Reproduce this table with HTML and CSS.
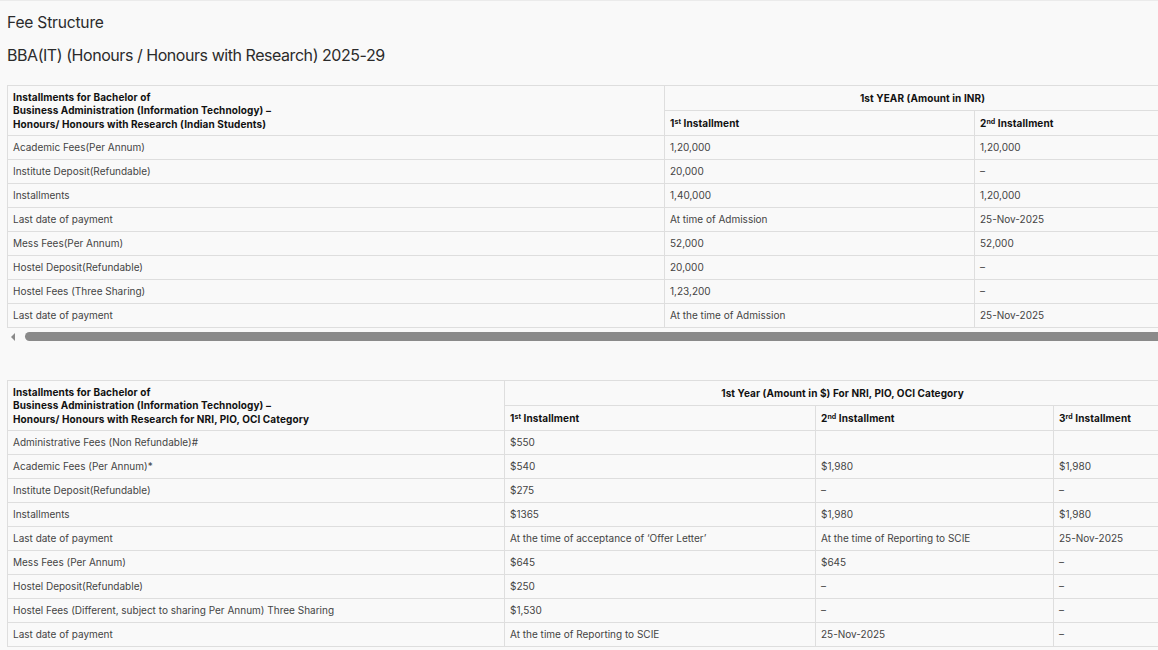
FILE: index.html
```html
<!DOCTYPE html>
<html lang="en">
<head>
<meta charset="utf-8">
<title>Fee Structure</title>
<link rel="stylesheet" href="styles.css">
</head>
<body>
<main class="page">
  <h2 class="title">Fee Structure</h2>
  <h3 class="subtitle">BBA(IT) (Honours / Honours with Research) 2025-29</h3>

  <section class="scroller">
    <div class="clip">
      <table class="fees fees-inr">
        <colgroup><col class="c1a"><col class="c2a"><col class="c3a"></colgroup>
        <thead>
          <tr>
            <th rowspan="2" class="lead">Installments for Bachelor of<br>Business Administration (Information Technology) –<br>Honours/ Honours with Research (Indian Students)</th>
            <th colspan="2" class="center">1st YEAR (Amount in INR)</th>
          </tr>
          <tr>
            <th>1<sup>st</sup> Installment</th>
            <th>2<sup>nd</sup> Installment</th>
          </tr>
        </thead>
        <tbody>
          <tr><td>Academic Fees(Per Annum)</td><td>1,20,000</td><td>1,20,000</td></tr>
          <tr><td>Institute Deposit(Refundable)</td><td>20,000</td><td>–</td></tr>
          <tr><td>Installments</td><td>1,40,000</td><td>1,20,000</td></tr>
          <tr><td>Last date of payment</td><td>At time of Admission</td><td>25-Nov-2025</td></tr>
          <tr><td>Mess Fees(Per Annum)</td><td>52,000</td><td>52,000</td></tr>
          <tr><td>Hostel Deposit(Refundable)</td><td>20,000</td><td>–</td></tr>
          <tr><td>Hostel Fees (Three Sharing)</td><td>1,23,200</td><td>–</td></tr>
          <tr><td>Last date of payment</td><td>At the time of Admission</td><td>25-Nov-2025</td></tr>
        </tbody>
      </table>
    </div>
    <div class="hbar">
      <span class="arrow"></span>
      <span class="thumb"></span>
    </div>
  </section>

  <section class="scroller second">
    <div class="clip">
      <table class="fees fees-usd">
        <colgroup><col class="c1b"><col class="c2b"><col class="c3b"><col class="c4b"></colgroup>
        <thead>
          <tr>
            <th rowspan="2" class="lead">Installments for Bachelor of<br>Business Administration (Information Technology) –<br>Honours/ Honours with Research for NRI, PIO, OCI Category</th>
            <th colspan="3" class="center">1st Year (Amount in $) For NRI, PIO, OCI Category</th>
          </tr>
          <tr>
            <th>1<sup>st</sup> Installment</th>
            <th>2<sup>nd</sup> Installment</th>
            <th>3<sup>rd</sup> Installment</th>
          </tr>
        </thead>
        <tbody>
          <tr><td>Administrative Fees (Non Refundable)#</td><td>$550</td><td></td><td></td></tr>
          <tr><td>Academic Fees (Per Annum)*</td><td>$540</td><td>$1,980</td><td>$1,980</td></tr>
          <tr><td>Institute Deposit(Refundable)</td><td>$275</td><td>–</td><td>–</td></tr>
          <tr><td>Installments</td><td>$1365</td><td>$1,980</td><td>$1,980</td></tr>
          <tr><td>Last date of payment</td><td>At the time of acceptance of ‘Offer Letter’</td><td>At the time of Reporting to SCIE</td><td>25-Nov-2025</td></tr>
          <tr><td>Mess Fees (Per Annum)</td><td>$645</td><td>$645</td><td>–</td></tr>
          <tr><td>Hostel Deposit(Refundable)</td><td>$250</td><td>–</td><td>–</td></tr>
          <tr><td>Hostel Fees (Different, subject to sharing Per Annum) Three Sharing</td><td>$1,530</td><td>–</td><td>–</td></tr>
          <tr><td>Last date of payment</td><td>At the time of Reporting to SCIE</td><td>25-Nov-2025</td><td>–</td></tr>
        </tbody>
      </table>
    </div>
  </section>
</main>
</body>
</html>
```

FILE: styles.css
```css
html, body {
  margin: 0;
  padding: 0;
  background: #f9f9f9;
}
body {
  border-top: 1px solid #ebebeb;
  font-family: Inter, "Noto Sans", sans-serif;
  color: #3a3a3a;
  overflow: hidden;
}
.page {
  padding: 0 0 0 7px;
}
.title {
  margin: 0;
  padding-top: 12px;
  font-size: 15.6px;
  line-height: 20px;
  font-weight: 400;
  color: #2b2b2b;
  letter-spacing: -0.2px;
}
.subtitle {
  margin: 0;
  padding-top: 12px;
  font-size: 16px;
  line-height: 20px;
  font-weight: 400;
  color: #2b2b2b;
  letter-spacing: -0.45px;
}
.scroller {
  margin-top: 20px;
  width: 1151px;
}
.scroller.second {
  margin-top: 38px;
}
.clip {
  overflow: hidden;
  width: 1151px;
}
.fees {
  border-collapse: collapse;
  table-layout: fixed;
  width: 1173px;
  font-size: 10px;
}
.c1a { width: 657px; }
.c2a { width: 310px; }
.c3a { width: 206px; }
.c1b { width: 497px; }
.c2b { width: 311px; }
.c3b { width: 238px; }
.c4b { width: 127px; }
.fees th,
.fees td {
  border: 1px solid #dedede;
  text-align: left;
  vertical-align: middle;
  padding: 0 5px;
  height: 23px;
  line-height: 13px;
  white-space: nowrap;
  overflow: hidden;
}
.fees th {
  font-weight: 700;
  color: #111;
  height: 24px;
  letter-spacing: 0.1px;
}
.fees th.lead {
  line-height: 13.5px;
  padding-top: 4px;
  padding-bottom: 3px;
}
.fees th.center {
  text-align: center;
}
.fees td {
  font-weight: 400;
  color: #444;
}
.fees sup {
  font-size: 7px;
  line-height: 0;
  vertical-align: 3px;
}
.hbar {
  position: relative;
  height: 11px;
  margin-top: 3px;
  display: flex;
  align-items: center;
}
.arrow {
  width: 0;
  height: 0;
  margin-left: 4px;
  border-top: 4px solid transparent;
  border-bottom: 4px solid transparent;
  border-right: 4px solid #8a8a8a;
}
.thumb {
  flex: 1;
  height: 9px;
  margin-left: 10px;
  margin-right: -20px;
  background: #8a8a8a;
  border-radius: 5px;
}
```
